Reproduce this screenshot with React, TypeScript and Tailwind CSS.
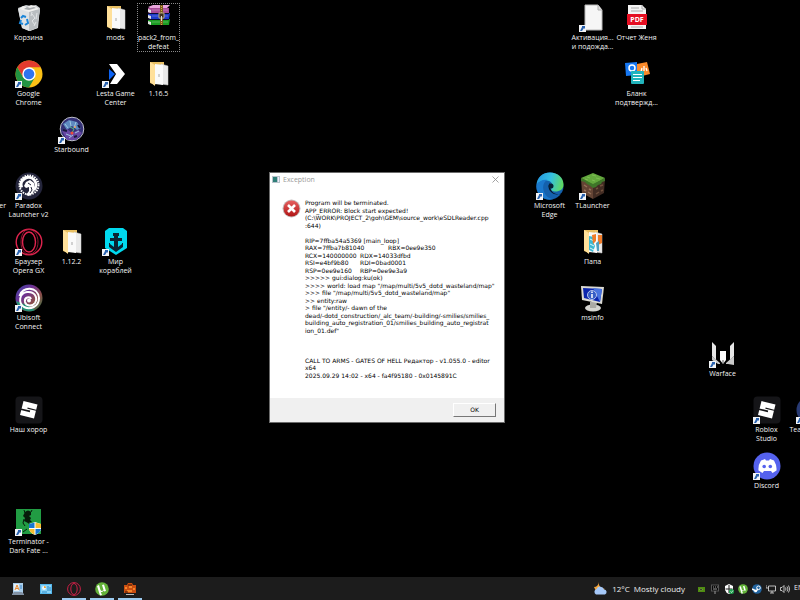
import { useState } from "react";
import type { ReactNode } from "react";

interface DesktopItem {
  name: string;
  col: number;
  row: number;
  icon: ReactNode;
  shortcut?: boolean;
  align?: "right";
}

const COL_STEP = 43.4;
const ROW_STEP = 56;

function Art({ children }: { children: ReactNode }) {
  return (
    <svg viewBox="0 0 28 28" className="size-7" aria-hidden="true">
      {children}
    </svg>
  );
}

const recycleBin = (
  <Art>
    <path d="M3 4l8-3 5 1 5-1 4 3-2 20-8 3-8-3z" fill="#c9cdd0" />
    <path d="M3 5l11 2 11-2-3 19-8 3-7-3z" fill="#dfe2e4" />
    <path d="M14 7v20l8-3 3-19z" fill="#b9bec1" />
    <path d="M4 5l4-3 4 1 4-2 4 1 4 3-10 3z" fill="#f1f1ef" />
    <path d="M9 5l3-2 3 1 4-1 2 1-7 2z" fill="#a9adb0" />
    <path d="M17 10l3 4-3 3 3 4M22 9l-1 6M17 8l-1 4M19 22l2-4" stroke="#e2e5e7" fill="none" />
    <path d="M6 14l2-2 3 1M12 15l1 4-3 2M8 20l-3-1 1-3" stroke="#1c86d8" strokeWidth="2" fill="none" />
  </Art>
);

function FolderArt({ children }: { children?: ReactNode }) {
  return (
    <Art>
      <path d="M5 2h14v5l-9 18-5-2z" fill="#e8bf63" />
      <path d="M16 4l7 2v19l-7-1z" fill="#e9e9e9" stroke="#cfcfcf" strokeWidth=".5" />
      <path d="M10 4l8 1v20l-8-1z" fill="#fafafa" />
      <path d="M5 2l5 3v21l-5-4z" fill="#ffe09a" />
      {children}
    </Art>
  );
}

const folder = (
  <FolderArt>
    <path d="M14 14v3" stroke="#a8a8a8" />
  </FolderArt>
);

const pictureFolder = (
  <FolderArt>
    <path d="M10 8l5 1-1 5 2 4-2 6-4-2z" fill="#3db9d3" />
    <path d="M11 11l4 2M11 16l4 2M11 20l4 2" stroke="#e2f7fa" />
    <path d="M13 7l4-1v7l-3 3zM19 7h4v8l-4 2z" fill="#f07c2a" />
    <path d="M17 15l3-2v10h-2z" fill="#4f9fc1" />
  </FolderArt>
);

const winrar = (
  <Art>
    <path d="M3 3l5-2h17l-3 3H5z" fill="#e9a5dc" />
    <path d="M3 4h21v6H5l-2-2z" fill="#a84b98" />
    <path d="M3 10l3-1h19l-1 6H5l-2-2z" fill="#1e3ccb" />
    <path d="M3 16l3-1h19l-1 6H5l-2-2z" fill="#1b9d22" />
    <path d="M3 9.500h21M3 15.500h21" stroke="#0b0b35" />
    <path d="M3 5l3 1v3L3 8zM3 11l3 1v3l-3-1zM3 17l3 1v3l-3-1z" fill="#e3e3e3" />
    <path d="M7 6h16M7 12h16M7 18h16" stroke="#fff" strokeOpacity=".25" />
    <path d="M15 1h3v20h-3z" fill="#7d5c1e" />
    <path d="M16.500 2v19" stroke="#d1ad4d" strokeDasharray="1 1" />
    <path d="M14 9h5v5h-5z" fill="#3d3020" stroke="#b5a67f" />
    <path d="M16.500 12v5" stroke="#ddd" />
  </Art>
);

const chrome = (
  <Art>
    <circle cx="14" cy="14" r="13.500" fill="#fbc116" />
    <path d="M2.300 7.300A13.500 13.500 0 0 1 25.700 7.300H14L8.200 17.300z" fill="#e33b2e" />
    <path d="M2.300 7.300A13.500 13.500 0 0 0 14 27.500l5.800-10H8.200z" fill="#229342" />
    <circle cx="14" cy="14" r="6.700" fill="#fff" />
    <circle cx="14" cy="14" r="5.300" fill="#2f74ee" />
  </Art>
);

const lesta = (
  <Art>
    <path d="M7 9l6 5-6 6z" fill="#0d63f3" />
    <path d="M7 4h8l8 10-8 10H8l6-10z" fill="#fff" />
  </Art>
);

const starbound = (
  <Art>
    <circle cx="14" cy="13" r="11.800" fill="#343177" stroke="#bfc0ca" />
    <path d="M5 8l6-4 8 2 4 6-4 2-5-4-5 4z" fill="#5e8ac0" />
    <path d="M4 15l5-2 5 4 6-3 4 3-6 7H9z" fill="#6848a4" />
    <path d="M7 8l3 4M12 5l1 5M18 6l-2 6M8 18l5 2M17 17l4-2M11 22l4-3" stroke="#9fc6e2" />
    <path d="M12 11l4 2-2 4" stroke="#51bd86" fill="none" />
    <circle cx="14" cy="17" r="1.500" fill="#ee4b37" />
    <circle cx="17" cy="11" r="1" fill="#f1a15c" />
    <path d="M5 14l4 1M19 20l-3 1M20 9l2 3" stroke="#16173e" strokeWidth="2" />
  </Art>
);

const paradox = (
  <Art>
    <circle cx="14" cy="14" r="13.500" fill="#24253b" />
    <circle cx="14" cy="13" r="9.500" fill="none" stroke="#fff" strokeWidth="2" strokeDasharray="1.500 1" />
    <path d="M5 16A9 9 0 1 1 20 19l-2-2a6 6 0 1 0-10-2z" fill="#fff" />
    <path d="M11 10l4-2 4 3 1 5-2 5-4 3-3-1 3-4v-4l-3 1-2-2z" fill="#fff" />
    <path d="M13 11l3 2M16 15l1 3-2 3" stroke="#24253b" fill="none" />
  </Art>
);

const opera = (
  <Art>
    <circle cx="14" cy="14" r="12.800" fill="none" stroke="#e0244e" strokeWidth="1.400" />
    <ellipse cx="14" cy="14" rx="6.500" ry="10" fill="none" stroke="#e0244e" strokeWidth="1.400" />
    <path d="M14 1.500c5 0 9 5 9 12.500s-4 12-9 12M14 1.500C9 1.500 6 7 6 14s3 12 8 12" fill="none" stroke="#b41b3e" strokeWidth=".8" />
  </Art>
);

const korabli = (
  <Art>
    <path d="M7 0h14l4 3v17L14 27 3 20V3z" fill="#00d9ee" />
    <path d="M11 5h6v3h-1v2h4v3h-4v6l4-3v-1h1v4l-7 5-7-5v-4h1v1l4 3v-6H8v-3h4V8h-1z" fill="#0b2433" />
  </Art>
);

const ubisoft = (
  <Art>
    <defs>
      <linearGradient id="ubi" x1="0" y1="0" x2="1" y2="1">
        <stop offset="0" stopColor="#3b46a8" />
        <stop offset=".35" stopColor="#6e3195" />
        <stop offset=".65" stopColor="#8d4d4a" />
        <stop offset="1" stopColor="#2e8148" />
      </linearGradient>
    </defs>
    <circle cx="14" cy="14" r="13.500" fill="url(#ubi)" />
    <path d="M1 17a13.500 13.500 0 0 0 19 9l-6-4z" fill="#269177" />
    <path d="M4.500 12C7 2 23 2 24 14c0 9-9 12-15 9-6-4-5-14 3-15 8-1 11 6 8 11-3 4-9 3-10-1-1-5 5-6 6-3" fill="none" stroke="#fff" strokeWidth="2" />
    <circle cx="14" cy="16.500" r="2" fill="#fff" />
  </Art>
);

const roblox = (
  <Art>
    <rect width="27" height="27" x=".5" y=".5" rx="4" fill="#151518" />
    <path d="M8.500 5L22.500 8.500 19 22.500 5 19z" fill="#fff" />
    <path d="M6 13.200l9 2.200" stroke="#151518" strokeWidth="1.600" />
    <path d="M12.500 12.200l9.500 2.300" stroke="#151518" strokeWidth="1.200" />
  </Art>
);

const terminator = (
  <Art>
    <rect x="1" y="1" width="25" height="25" fill="#219c43" />
    <path d="M10 4q3-3 6 0v3l-2 1 2 2-1 2 2 2-4 1-4-2 1-3-2-2z" fill="#071b0b" />
    <path d="M9 2l1 3M9 11l-1 4 2 3M13 14l2 3M16 4l1-2M8 24l4-3" stroke="#071b0b" fill="none" />
    <path d="M14 16l6-2 6 2v5q-1 4-6 6-5-2-6-6z" fill="#fff" />
    <path d="M19.500 14.500v5.500H14v-4z" fill="#1877d2" />
    <path d="M20.500 14.500l5.500 1.500v4h-5.500z" fill="#f5bd32" />
    <path d="M14 21h5.500v5.500Q15 25 14 21z" fill="#f5bd32" />
    <path d="M20.500 21H26Q25 25 20.500 26.500z" fill="#1877d2" />
  </Art>
);

const blankFile = (
  <Art>
    <path d="M6 1h13l4 5v20H6z" fill="#f6f6f6" stroke="#b8b8b8" />
    <path d="M19 1v5h4" fill="#ddd" stroke="#b0b0b0" />
  </Art>
);

const pdf = (
  <Art>
    <path d="M5 1h14l4 4v20H5z" fill="#f4f4f4" />
    <path d="M19 1v4h4M8 4h8M8 7h12M8 23h12" stroke="#aaa" fill="none" />
    <rect x="4" y="10" width="20" height="11" fill="#e50e22" />
    <text x="14" y="18" textAnchor="middle" fontFamily="Open Sans" fontSize="7" fontWeight="700" fill="#fff">
      PDF
    </text>
  </Art>
);

const blank = (
  <Art>
    <path d="M2 3l12-1v13l-11 1z" fill="#1677f2" />
    <circle cx="9" cy="8" r="3" fill="none" stroke="#fff" strokeWidth="1.500" />
    <path d="M14 4l10-2 3 12-8 2-5-3z" fill="#fa8a2b" />
    <path d="M18 12l1-4M21 11V6M24 11l-1-3" stroke="#fff" strokeWidth="1.300" />
    <rect x="8" y="11" width="13" height="13" rx="1" fill="#22b4bc" />
    <path d="M10 14.500h9M10 17.500h9M10 20.500h7" stroke="#fff" />
  </Art>
);

const edge = (
  <Art>
    <defs>
      <linearGradient id="edgeTop" x1="0" y1=".4" x2="1" y2=".6">
        <stop offset="0" stopColor="#2599e0" />
        <stop offset=".5" stopColor="#35c0e0" />
        <stop offset="1" stopColor="#62da5b" />
      </linearGradient>
    </defs>
    <circle cx="14" cy="14" r="13.500" fill="#1461ad" />
    <path d="M.5 13C1 5 7 .5 14 .5c8 0 13.500 5 13.500 12 0 5-4 7-8 7-3 0-5-1-4-3 2-4 0-8-5-8-5 0-9 2-10 5z" fill="url(#edgeTop)" />
    <path d="M.5 13c2-4 7-6 11-5-4 2-5 6-4 10 1 5 5 9 10 9C8 30-1 22 .5 13z" fill="#1a78cc" />
    <path d="M14 11c-3 3-1 9 4 11 4 1 7 0 9-2l1 2-3 4-3 1 4-5c-5 1-9 0-11-4-1-2-1-4-1-6z" fill="#000" fillOpacity=".8" />
    <circle cx="15" cy="14" r="2.500" fill="#062036" />
  </Art>
);

const tlauncher = (
  <Art>
    <path d="M2 6l12 6v15L3 21z" fill="#644434" />
    <path d="M14 12l12-6-1 15-11 6z" fill="#422c23" />
    <path d="M14 1l12 5-12 7L2 6z" fill="#63a83d" />
    <path d="M2 6l12 6 12-6v3l-3 1-1 2-3 1-2 2-3 1-4-3-2-1-2-2-4-1z" fill="#3f7629" />
    <path d="M8 5l3 1M13 3l4 1M17 6l4 1M13 8l3 1M6 7l3 1" stroke="#7ebb53" />
    <path d="M5 13l3 2M9 20l3 2M5 18l2 1M10 17l2 1" stroke="#957058" strokeWidth="1.500" />
    <path d="M17 17l2-1M21 14l3-1M17 22l3-2M22 19l2-1" stroke="#70503c" strokeWidth="1.500" />
  </Art>
);

const msinfo = (
  <Art>
    <ellipse cx="14" cy="24" rx="8" ry="3.500" fill="#d5d5d1" />
    <path d="M11 18h7l-1 6h-6z" fill="#aaa9a4" />
    <path d="M2 2l23 1-2 17-20-4z" fill="#dbdad3" />
    <path d="M4 4l19 1-2 13-16-4z" fill="#0b25ad" />
    <path d="M14 4l9 1-2 13z" fill="#4974df" />
    <circle cx="13" cy="11" r="4.500" fill="#365dc5" stroke="#b5c4ee" />
    <path d="M13 10v4M13 7.500V9" stroke="#fff" strokeWidth="1.500" />
  </Art>
);

const warface = (
  <Art>
    <path d="M3 2l4 4v14l-4-4zM25 2l-4 4v14l4-4z" fill="#e7e7e7" />
    <path d="M11 11h6v9l-3 4-3-4z" fill="#fff" />
    <path d="M3 16l8 7v1H9l-6-4zM25 16l-8 7v1h2l6 1z" fill="#c9c9c9" />
    <path d="M14 20v4" stroke="#555" />
  </Art>
);

const discord = (
  <Art>
    <circle cx="14" cy="14" r="13.500" fill="#5562ee" />
    <path d="M8 8.500l4-1.500 1 1.500h3L17 7l4 1.500q3 5 2.500 10L19.500 21l-1.500-2h-7l-1.500 2-4-2.500Q5 13 8 8.500z" fill="#fff" />
    <circle cx="11.200" cy="14.500" r="1.800" fill="#5562ee" />
    <circle cx="17.300" cy="14.500" r="1.800" fill="#5562ee" />
  </Art>
);

const team = (
  <Art>
    <circle cx="14" cy="14" r="13.500" fill="#283a73" />
    <path d="M6 8l9 4v8l-9-3z" fill="#4c67ad" />
  </Art>
);

const items: DesktopItem[] = [
  { name: "Корзина", col: 0, row: 0, icon: recycleBin },
  { name: "mods", col: 2, row: 0, icon: folder },
  { name: "pack2_from_\ndefeat", col: 3, row: 0, icon: winrar },
  { name: "Активация...\nи подожда...", col: 13, row: 0, icon: blankFile, shortcut: true },
  { name: "Отчет Женя", col: 14, row: 0, icon: pdf },
  { name: "Google\nChrome", col: 0, row: 1, icon: chrome, shortcut: true },
  { name: "Lesta Game\nCenter", col: 2, row: 1, icon: lesta, shortcut: true },
  { name: "1.16.5", col: 3, row: 1, icon: folder },
  { name: "Бланк\nподтвержд...", col: 14, row: 1, icon: blank },
  { name: "Starbound", col: 1, row: 2, icon: starbound, shortcut: true },
  { name: "er", col: -1, row: 3, icon: null, align: "right" },
  { name: "Paradox\nLauncher v2", col: 0, row: 3, icon: paradox, shortcut: true },
  { name: "Microsoft\nEdge", col: 12, row: 3, icon: edge, shortcut: true },
  { name: "TLauncher", col: 13, row: 3, icon: tlauncher, shortcut: true },
  { name: "Браузер\nOpera GX", col: 0, row: 4, icon: opera, shortcut: true },
  { name: "1.12.2", col: 1, row: 4, icon: folder },
  { name: "Мир\nкораблей", col: 2, row: 4, icon: korabli, shortcut: true },
  { name: "Папа", col: 13, row: 4, icon: pictureFolder },
  { name: "Ubisoft\nConnect", col: 0, row: 5, icon: ubisoft, shortcut: true },
  { name: "msinfo", col: 13, row: 5, icon: msinfo },
  { name: "Warface", col: 16, row: 6, icon: warface, shortcut: true },
  { name: "Наш хорор", col: 0, row: 7, icon: roblox },
  { name: "Roblox\nStudio", col: 17, row: 7, icon: roblox, shortcut: true },
  { name: "TeamViewer", col: 18, row: 7, icon: team, shortcut: true },
  { name: "Discord", col: 17, row: 8, icon: discord, shortcut: true },
  { name: "Terminator -\nDark Fate ...", col: 0, row: 9, icon: terminator, shortcut: true },
];

function DesktopIcon({ item, selected, onSelect }: { item: DesktopItem; selected: boolean; onSelect: () => void }) {
  return (
    <button
      type="button"
      onClick={onSelect}
      style={{ left: Math.round(7 + item.col * COL_STEP), top: 3 + item.row * ROW_STEP }}
      className={`absolute flex w-[43px] flex-col items-center border ${
        selected ? "border-dotted border-[#8a8a8a]" : "border-transparent"
      }`}
    >
      <span className="relative block size-7">
        {item.icon}
        {item.shortcut && (
          <svg viewBox="0 0 7 7" className="absolute bottom-0 left-0 size-[7px]" aria-hidden="true">
            <rect width="7" height="7" fill="#f2f4f7" />
            <path d="M3 1h3v3L5 3 3 6H1l2-4z" fill="#2a63b0" />
          </svg>
        )}
      </span>
      <span
        className={`mt-px w-full text-[7px] leading-[9px] whitespace-pre text-[#f4f4f4] ${
          item.align === "right" ? "text-right" : "flex flex-col items-center"
        }`}
      >
        {item.name}
      </span>
    </button>
  );
}

const report = [
  "Program will be terminated.",
  "APP_ERROR: Block start expected!",
  "(C:\\WORK\\PROJECT_2\\goh\\GEM\\source_work\\eSDLReader.cpp",
  ":644)",
  "",
  "RIP=7ffba54a5369 [main_loop]",
  ["RAX=7ffba7b81040", "RBX=0ee9e350"],
  ["RCX=140000000", "RDX=14033dfbd"],
  ["RSI=e4bf9b80", "RDI=0bad0001"],
  ["RSP=0ee9e160", "RBP=0ee9e3a9"],
  ">>>>> gui:dialog:ku(ok)",
  ">>>> world: load map \"/map/multi/5v5_dotd_wasteland/map\"",
  ">>> file \"/map/multi/5v5_dotd_wasteland/map\"",
  ">> entity:raw",
  "> file \"/entity/- dawn of the",
  "dead/-dotd_construction/_alc_team/-building/-smilies/smilies_",
  "building_auto_registration_01/smilies_building_auto_registrat",
  "ion_01.def\"",
  "",
  "",
  "",
  "CALL TO ARMS - GATES OF HELL Редактор - v1.055.0 - editor",
  "x64",
  "2025.09.29 14:02 - x64 - fa4f95180 - 0x0145891C",
];

function ExceptionDialog({ onClose }: { onClose: () => void }) {
  return (
    <section
      role="dialog"
      aria-labelledby="exception-title"
      className="absolute top-[172px] left-[269px] flex w-[236px] flex-col border border-[#6b6b6b] bg-white text-black"
    >
      <header className="flex h-3 items-center gap-[3px] pr-[5px] pl-[2px]">
        <svg viewBox="0 0 8 7" className="h-[7px] w-2" aria-hidden="true">
          <rect width="8" height="7" fill="#b9c4cc" />
          <rect x="1" y="1" width="4" height="5" fill="#2f7f78" />
          <rect x="6" y="1" width="1" height="5" fill="#eef" />
        </svg>
        <h1 id="exception-title" className="flex-1 text-[7px] leading-[9px] text-[#999]">
          Exception
        </h1>
        <button type="button" aria-label="Close" onClick={onClose}>
          <svg viewBox="0 0 7 7" className="size-[7px]" aria-hidden="true">
            <path d="M.5.5l6 6M6.500.5l-6 6" stroke="#8c8c8c" strokeWidth=".8" />
          </svg>
        </button>
      </header>
      <div className="flex gap-1 pt-[14px] pb-[19px] pl-3">
        <svg viewBox="0 0 19 19" className="size-[19px]" aria-hidden="true">
          <defs>
            <linearGradient id="err" x1="0" y1="0" x2="0" y2="1">
              <stop offset="0" stopColor="#e66060" />
              <stop offset="1" stopColor="#b01515" />
            </linearGradient>
          </defs>
          <circle cx="9.500" cy="9.500" r="9" fill="#c4bcbc" />
          <circle cx="9.500" cy="9.500" r="8" fill="url(#err)" />
          <path d="M6 6l7 7M13 6l-7 7" stroke="#fff" strokeWidth="2.600" />
        </svg>
        <div className="font-['DejaVu_Sans',sans-serif] text-[6px] whitespace-pre">
          {report.map((line, i) => (
            <p key={i} className="flex odd:h-2 odd:leading-[8px] even:h-[7px] even:leading-[7px]">
              {Array.isArray(line) ? (
                <>
                  <span className={i === 6 ? "w-[83px]" : "w-[55px]"}>{line[0]}</span>
                  <span>{line[1]}</span>
                </>
              ) : (
                line
              )}
            </p>
          ))}
        </div>
      </div>
      <footer className="flex justify-end bg-[#f0f0f0] px-2 py-[5px]">
        <button
          type="button"
          onClick={onClose}
          className="h-[14px] w-[43px] border border-t-white border-r-[#777] border-b-[#777] border-l-white font-['DejaVu_Sans',sans-serif] text-[6px] leading-[12px]"
        >
          OK
        </button>
      </footer>
    </section>
  );
}

const utorrent = (
  <svg viewBox="0 0 14 14" className="size-full" aria-hidden="true">
    <circle cx="7" cy="7" r="6.800" fill="#63b239" />
    <path d="M4 3l1.500 5q1 2 3 0L7 3l2-.5 2 6.500-2 .5-.5-1Q7 11 5.500 9.500L7 13l-2 .5L2 4z" fill="#fff" />
  </svg>
);

const taskbarApps = [
  {
    name: "WordPad",
    open: false,
    icon: (
      <svg viewBox="0 0 14 14" className="size-full" aria-hidden="true">
        <path d="M2 1h10v10H2z" fill="#a9cdea" />
        <path d="M1 12l2-2h8l2 2v1H1z" fill="#8292a5" />
        <path d="M3 2h5v7H3z" fill="#e7eef4" />
        <path d="M4 8l2-5 2 5M5 6.500h2" stroke="#e88c35" fill="none" />
        <path d="M9 4h2M9 6h2" stroke="#3b83c5" />
      </svg>
    ),
  },
  {
    name: "Control Panel",
    open: false,
    icon: (
      <svg viewBox="0 0 14 14" className="size-full" aria-hidden="true">
        <rect x="1" y="2" width="12" height="10" fill="#53b7ec" />
        <rect x="2" y="3" width="10" height="8" fill="#8bd3f5" />
        <circle cx="5" cy="6" r="2" fill="#e7f6fd" />
        <path d="M5 6V4a2 2 0 0 1 2 2z" fill="#f0a030" />
        <path d="M9 4v5M11 5v4M3 10h5" stroke="#2b8ccb" />
      </svg>
    ),
  },
  {
    name: "Opera GX",
    open: true,
    icon: (
      <svg viewBox="0 0 14 14" className="size-full" aria-hidden="true">
        <circle cx="7" cy="7" r="6.400" fill="none" stroke="#c91f46" />
        <ellipse cx="7" cy="7" rx="3.200" ry="5.500" fill="none" stroke="#c91f46" />
      </svg>
    ),
  },
  { name: "uTorrent", open: true, icon: utorrent },
  {
    name: "Gates of Hell Editor",
    open: true,
    icon: (
      <svg viewBox="0 0 14 14" className="size-full" aria-hidden="true">
        <path d="M1 3h3l1-2h4l1 2h3v8H1z" fill="#c94d10" />
        <path d="M2 5h2v2H2zM6 4h3v2H6zM10 6h2v2h-2zM4 8h5v2H4z" fill="#f5862b" />
        <path d="M5 3h4M2 10h3" stroke="#431806" />
        <path d="M3 12.500h8" stroke="#bbb" />
      </svg>
    ),
  },
];

const trayIcons = [
  {
    name: "NVIDIA",
    icon: (
      <>
        <rect x="2" y="3" width="7" height="5" fill="#4f8d10" />
        <path d="M3 5.500q2-2 4 0-2 2-4 0z" fill="#1c1c1c" stroke="#8cc04c" strokeWidth=".6" />
      </>
    ),
  },
  {
    name: "Monitor",
    icon: (
      <>
        <rect x="1.500" y="1" width="7" height="6" fill="#080808" stroke="#555" />
        <path d="M3 3h1M5 3h1M7 3h1M3 5h4M5 7v3" stroke="#999" />
      </>
    ),
  },
  {
    name: "Windows Security",
    icon: (
      <>
        <path d="M5 0l4 2v4Q8 9 5 10 2 9 1 6V2z" fill="#fff" />
        <path d="M5 1v8M1.500 5h7" stroke="#1c1c1c" />
        <circle cx="7.500" cy="7.500" r="2.500" fill="#20a050" />
        <path d="M6.500 7.500l1 1 1.500-2" stroke="#fff" strokeWidth=".7" fill="none" />
      </>
    ),
  },
  { name: "uTorrent", icon: <g transform="scale(.714)">{utorrent.props.children}</g> },
  {
    name: "Steam",
    icon: (
      <>
        <circle cx="5" cy="5" r="4.800" fill="#20639f" />
        <circle cx="6.500" cy="3.800" r="1.800" fill="none" stroke="#fff" />
        <path d="M0 5l4 2 2-2" stroke="#fff" strokeWidth="1.500" fill="none" />
        <circle cx="3.500" cy="7" r="1.300" fill="#fff" />
      </>
    ),
  },
  {
    name: "Network",
    icon: (
      <path d="M2.500 2h7v5h-7zM0 1v3h2.500M4 9h4M6 7v2" fill="none" stroke="#e4e4e4" strokeWidth=".8" />
    ),
  },
  {
    name: "Volume",
    icon: (
      <path d="M.5 3.500h1.500L4 1.500v7L2 6.500H.5zM5.500 3.500q1 1.500 0 3M7 2.500q2 2.500 0 5M8.500 1.500q2.500 3.500 0 7" fill="none" stroke="#e4e4e4" strokeWidth=".8" />
    ),
  },
];

function Taskbar() {
  return (
    <footer className="flex h-[23px] shrink-0 items-stretch overflow-hidden bg-[#1c1c1c] pl-1">
      {taskbarApps.map((app) => (
        <button
          key={app.name}
          type="button"
          aria-label={app.name}
          className="relative flex w-7 items-center justify-center"
        >
          <span className="block size-[14px]">{app.icon}</span>
          {app.open && <span className="absolute inset-x-[2px] bottom-0 h-[2px] bg-[#9ccbf0]" />}
        </button>
      ))}
      <button type="button" className="ml-auto flex items-center gap-1 pr-[11px] text-[8px] leading-[11px] text-[#eee]">
        <svg viewBox="0 0 15 13" className="h-[13px] w-[15px]" aria-hidden="true">
          <path d="M6 0q-1 4 3 6l3 1-3 2H3L1 5q4 0 5-5z" fill="#f3a43a" />
          <path d="M3 12.500a3 3 0 0 1 .5-5.500 4 4 0 0 1 7.500.5 2.600 2.600 0 0 1 1 5z" fill="#a5c8f8" />
        </svg>
        <span>12°C</span>
        <span>Mostly cloudy</span>
      </button>
      <div className="flex items-center gap-1">
        {trayIcons.map((tray) => (
          <button key={tray.name} type="button" aria-label={tray.name} className="block">
            <svg viewBox="0 0 10 10" className="size-[10px]" aria-hidden="true">
              {tray.icon}
            </svg>
          </button>
        ))}
        <span className="w-[6px] overflow-hidden text-[7px] whitespace-nowrap text-[#eee]">EN</span>
      </div>
    </footer>
  );
}

export default function App() {
  const [selected, setSelected] = useState("pack2_from_\ndefeat");
  const [dialogOpen, setDialogOpen] = useState(true);

  return (
    <div className="flex h-screen flex-col bg-black font-['Open_Sans','Noto_Sans',sans-serif]">
      <main className="relative flex-1 overflow-hidden">
        {items.map((item) => (
          <DesktopIcon
            key={item.name}
            item={item}
            selected={selected === item.name}
            onSelect={() => setSelected(item.name)}
          />
        ))}
        {dialogOpen && <ExceptionDialog onClose={() => setDialogOpen(false)} />}
      </main>
      <Taskbar />
    </div>
  );
}
